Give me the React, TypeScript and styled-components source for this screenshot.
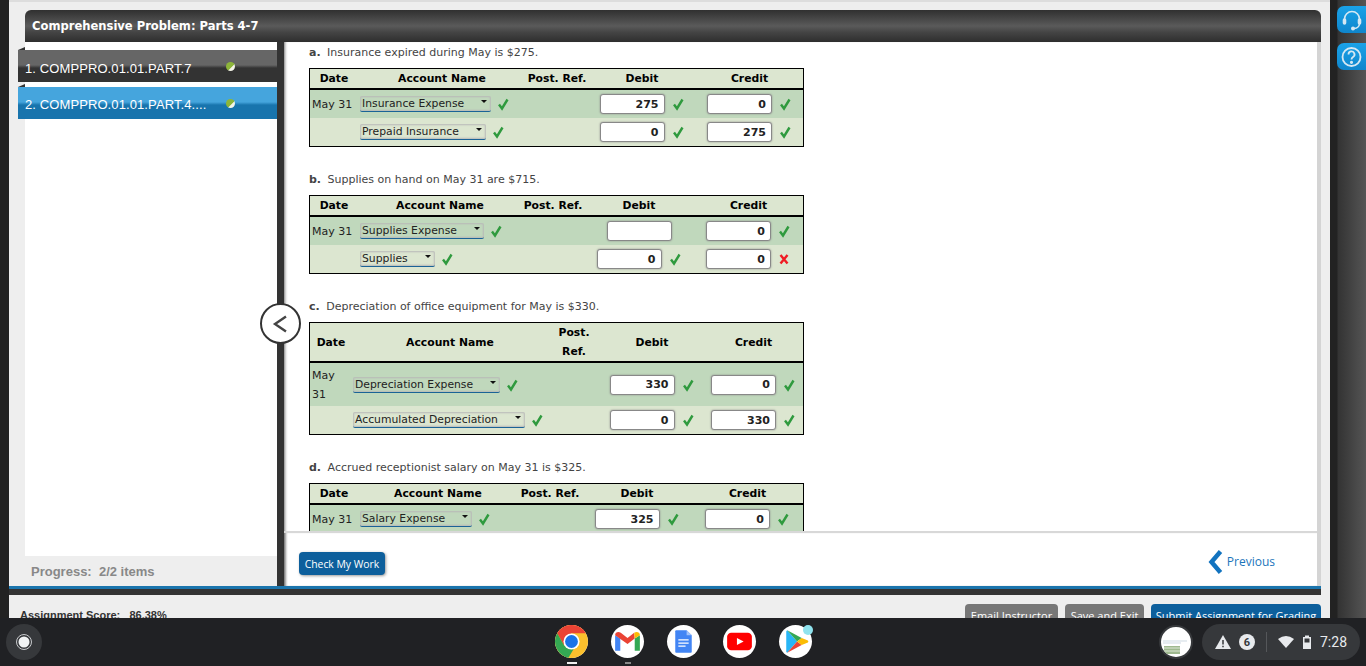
import React from 'react';
import styled, { createGlobalStyle } from 'styled-components';

const GlobalStyle = createGlobalStyle`
  html, body {
    margin: 0;
    padding: 0;
    height: 100%;
    overflow: hidden;
    background: #202124;
  }
  * {
    box-sizing: border-box;
  }
`;

const Page = styled.div`
  width: 1366px;
  height: 666px;
  display: flex;
  flex-direction: column;
  overflow: hidden;
`;

const Workspace = styled.div`
  height: 618px;
  display: flex;
  overflow: hidden;
`;

const LeftEdge = styled.div`
  width: 9px;
  background: #222;
`;

const Window = styled.div`
  width: 1321px;
  display: flex;
  flex-direction: column;
  background: #eee;
  border-top: 2px solid #ddd;
`;

const TitleWrap = styled.div`
  padding: 8px 9px 0 16px;
`;

const TitleBar = styled.div`
  height: 32px;
  padding-left: 7px;
  display: flex;
  align-items: center;
  border-radius: 6px 6px 0 0;
  background: linear-gradient(#303030, #5a5a5a 50%, #444 70%, #2e2e2e);
  color: #fff;
  font: bold 11.55px 'DejaVu Sans', Verdana, sans-serif;
`;

const Body = styled.div`
  height: 544px;
  margin: 0 9px 0 16px;
  display: flex;
`;

const Sidebar = styled.div`
  width: 252px;
  display: flex;
  flex-direction: column;
`;

const TabList = styled.div`
  flex: 1;
  padding-top: 8px;
  background: #fff;
  display: flex;
  flex-direction: column;
  gap: 5px;
`;

const Tab = styled.div<{ $active?: boolean }>`
  position: relative;
  height: 32px;
  width: 259px;
  margin-left: -7px;
  padding-left: 7px;
  display: flex;
  align-items: center;
  color: #fff;
  font: 13px 'Liberation Sans', Arial, sans-serif;
  letter-spacing: 0.1px;
  background: ${({ $active }) =>
    $active
      ? 'linear-gradient(#45a5dd 0, #45a5dd 15px, #1874ad 18px, #1874ad 100%)'
      : 'linear-gradient(#666 0, #666 15px, #333 18px, #333 100%)'};

  &::before {
    content: '';
    position: absolute;
    left: 0;
    top: -3px;
    border-style: solid;
    border-width: 0 0 3px 7px;
    border-color: transparent transparent #333 transparent;
  }
`;

const TabLabel = styled.span<{ $drop: number }>`
  width: 201px;
  padding-top: ${({ $drop }) => $drop}px;
`;

const StatusDot = styled.span`
  width: 9px;
  height: 9px;
  border-radius: 50%;
  background: linear-gradient(135deg, #8db53a 58%, #f4f4e8 62%);
`;

const Progress = styled.div`
  height: 30px;
  padding-left: 6px;
  display: flex;
  align-items: center;
  color: #888;
  font: bold 13px 'Liberation Sans', Arial, sans-serif;
  white-space: pre;
`;

const Divider = styled.div`
  position: relative;
  width: 7px;
  background: #333;
`;

const CollapseButton = styled.button`
  position: absolute;
  left: -17px;
  top: 261px;
  width: 41px;
  height: 41px;
  padding: 0;
  display: flex;
  align-items: center;
  justify-content: center;
  border-radius: 50%;
  border: 2px solid #333;
  background: #fff;
  color: #444;
`;

const Main = styled.div`
  width: 1037px;
  display: flex;
  flex-direction: column;
  background: #fff;
  border-right: 4px solid #d4d4d4;
  box-shadow: inset 3px 0 3px -2px #777;
`;

const Scroll = styled.div`
  height: 489px;
  overflow: hidden;
  padding: 3px 0 0 25px;
`;

const Question = styled.p`
  margin: 25px 0 7px;
  height: 16px;
  color: #444;
  font: 11px/16px 'DejaVu Sans', Verdana, sans-serif;

  &:first-child {
    margin-top: 0;
  }

  b {
    margin-right: 3px;
  }
`;

const Sheet = styled.table`
  width: 495px;
  table-layout: fixed;
  border-collapse: separate;
  border-spacing: 0;
  border: 1px solid #000;
  font: 10.8px 'DejaVu Sans', Verdana, sans-serif;
  color: #222;
`;

const Col = styled.col<{ $w: number }>`
  width: ${({ $w }) => $w}px;
`;

const HeadRow = styled.tr`
  background: #dce6d0;
`;

const Th = styled.th`
  height: 21px;
  padding: 0;
  border-bottom: 2px solid #000;
  font-weight: bold;
  line-height: 19px;
  color: #000;
  text-align: center;
`;

const Row = styled.tr<{ $shade?: boolean; $h?: number }>`
  height: ${({ $h }) => $h ?? 28}px;
  background: ${({ $shade }) => ($shade ? '#c0d8bc' : '#dce6d0')};
`;

const DateCell = styled.td`
  padding: 0 0 0 2px;
  font-size: 11px;
  line-height: 19px;
  white-space: normal;
`;

const AccountCell = styled.td<{ $pad?: number }>`
  padding: 0 0 0 ${({ $pad }) => $pad ?? 2}px;
`;

const AmountCell = styled.td`
  padding: 0;
  text-align: center;
`;

const Field = styled.div`
  display: flex;
  align-items: center;
`;

const AmountField = styled(Field)`
  display: inline-flex;
  vertical-align: middle;
`;

const SelectBox = styled.div<{ $w: number }>`
  position: relative;
  width: ${({ $w }) => $w}px;
  height: 16px;
  padding-left: 2px;
  line-height: 16px;
  color: #222;
  background: transparent;
  border-radius: 2px;
  box-shadow: inset 0 0 2px 1px #b8b8b8;
  border-bottom: 1px solid #1a6396;

  &::after {
    content: '';
    position: absolute;
    right: 4px;
    top: 4px;
    border-style: solid;
    border-width: 3px 3px 0;
    border-color: #111 transparent transparent;
  }
`;

const Amount = styled.input`
  width: 65px;
  height: 20px;
  padding: 0 5px 0 0;
  border: 1px solid #888;
  border-radius: 3px;
  background: #fff;
  box-shadow: 0 0 2px #888;
  outline: none;
  color: #222;
  text-align: right;
  font: bold 11px 'DejaVu Sans', Verdana, sans-serif;
`;

const MarkSlot = styled.span<{ $gap: number }>`
  margin-left: ${({ $gap }) => $gap}px;
  width: 14px;
  height: 14px;
  display: inline-flex;
`;

const Footer = styled.div`
  flex: 1;
  padding: 4px 42px 0 15px;
  display: flex;
  align-items: center;
  justify-content: space-between;
  border-top: 2px solid #d8d8d8;
  box-shadow: inset 3px 0 3px -2px #777;
`;

const CheckButton = styled.button`
  width: 86px;
  height: 23px;
  margin-top: 4px;
  padding: 0;
  border: 0;
  border-radius: 4px;
  background: #0d5f9c;
  color: #fff;
  font: 10.4px 'Open Sans', Tahoma, sans-serif;
  box-shadow: 1px 1px 3px #999;
`;

const PrevLink = styled.a`
  display: flex;
  align-items: center;
  gap: 4px;
  color: #1b75bb;
  font: 12px 'Open Sans', Tahoma, sans-serif;
`;

const BlueLine = styled.div`
  height: 3px;
  margin-right: 9px;
  background: #1b75ad;
`;

const DarkBand = styled.div`
  height: 6px;
  margin-right: 9px;
  background: #333;
`;

const BottomBar = styled.div`
  flex: 1;
  padding: 9px 9px 0 11px;
  display: flex;
  align-items: flex-start;
  justify-content: space-between;
  overflow: hidden;
`;

const Score = styled.div`
  margin-top: 5px;
  color: #333;
  font: bold 11px 'Liberation Sans', Arial, sans-serif;
  white-space: pre;
`;

const BottomActions = styled.div`
  display: flex;
  gap: 7px;
`;

const BottomButton = styled.button<{ $primary?: boolean; $w: number }>`
  width: ${({ $w }) => $w}px;
  height: 24px;
  padding: 0 0 2px;
  border: 0;
  border-radius: 4px 4px 0 0;
  background: ${({ $primary }) => ($primary ? '#0d5f9c' : '#777')};
  color: #fff;
  font: 11px 'Open Sans', Tahoma, sans-serif;
`;

const Rail = styled.div`
  flex: 1;
  padding: 6px 0 0 7px;
  display: flex;
  flex-direction: column;
  gap: 10px;
  background: linear-gradient(90deg, #222 7px, #333 8px, #555 100%);
`;

const RailButton = styled.button`
  width: 29px;
  height: 27px;
  padding: 0;
  display: flex;
  align-items: center;
  justify-content: center;
  border: 0;
  border-radius: 7px 0 0 7px;
  background: linear-gradient(#1aa2e8, #0f86cc);
`;

const Shelf = styled.div`
  flex: 1;
  position: relative;
  display: flex;
  align-items: center;
  justify-content: space-between;
  padding: 0 6px;
  background: #202124;
`;

const Launcher = styled.div`
  width: 36px;
  height: 36px;
  display: flex;
  align-items: center;
  justify-content: center;
  border-radius: 50%;
  background: #36383b;
`;

const AppRow = styled.div`
  position: absolute;
  left: 555px;
  top: 7px;
  display: flex;
  gap: 23px;
`;

const AppIcon = styled.div<{ $running?: 'focus' | 'open' }>`
  position: relative;
  width: 33px;
  height: 33px;
  border-radius: 50%;
  background: #fff;

  &::after {
    content: '';
    display: ${({ $running }) => ($running ? 'block' : 'none')};
    position: absolute;
    left: 50%;
    bottom: -6px;
    height: 2px;
    width: ${({ $running }) => ($running === 'focus' ? 10 : 6)}px;
    transform: translateX(-50%);
    background: ${({ $running }) => ($running === 'focus' ? '#eee' : '#888')};
  }
`;

const Badge = styled.span`
  position: absolute;
  right: -1px;
  top: 0;
  width: 10px;
  height: 10px;
  border-radius: 50%;
  background: #8fe3ee;
`;

const Tray = styled.div`
  display: flex;
  align-items: center;
  gap: 9px;
`;

const Thumb = styled.div`
  width: 34px;
  height: 34px;
  border-radius: 50%;
  overflow: hidden;
  border: 2px solid #36383b;
  background: #fff;
`;

const StatusPill = styled.div`
  width: 158px;
  height: 36px;
  padding-left: 13px;
  display: flex;
  align-items: center;
  border-radius: 18px;
  background: #36383b;
  color: #e8eaed;
  font: 14px Roboto, sans-serif;
`;

const CountBubble = styled.span`
  width: 16px;
  height: 16px;
  margin-left: 8px;
  display: flex;
  align-items: center;
  justify-content: center;
  border-radius: 50%;
  background: #e8eaed;
  color: #36383b;
  font: bold 11px Roboto, sans-serif;
`;

const PillSep = styled.span`
  width: 1px;
  height: 20px;
  margin: 0 11px;
  background: #55575a;
`;

const BatteryIcon = styled.svg`
  margin-left: 5px;
`;

const Clock = styled.span`
  margin-left: 5px;
`;

const CheckMark = () => (
  <svg width="14" height="14" viewBox="0 0 14 14">
    <path d="M3 7.5 L6 11.5 L11.5 2.5" fill="none" stroke="#2f9a3e" strokeWidth="2.4" />
  </svg>
);

const CrossMark = () => (
  <svg width="14" height="14" viewBox="0 0 14 14">
    <path d="M3.5 3 L10.5 11.5 M10.5 3 L3.5 11.5" fill="none" stroke="#f01c24" strokeWidth="2.4" />
  </svg>
);

const Mark = ({ kind, gap }: { kind?: 'ok' | 'bad'; gap: number }) => (
  <MarkSlot $gap={gap}>{kind === 'bad' ? <CrossMark /> : <CheckMark />}</MarkSlot>
);

type Line = {
  date?: string;
  account: string;
  selectWidth: number;
  debit?: string;
  credit: string;
  creditBad?: boolean;
};

type Entry = {
  letter: string;
  text: string;
  cols: number[];
  wrapHead?: boolean;
  rowHeights?: number[];
  lines: Line[];
};

const entries: Entry[] = [
  {
    letter: 'a.',
    text: 'Insurance expired during May is $275.',
    cols: [48, 168, 62, 108, 107],
    lines: [
      { date: 'May 31', account: 'Insurance Expense', selectWidth: 131, debit: '275', credit: '0' },
      { account: 'Prepaid Insurance', selectWidth: 126, debit: '0', credit: '275' },
    ],
  },
  {
    letter: 'b.',
    text: 'Supplies on hand on May 31 are $715.',
    cols: [48, 164, 62, 110, 109],
    lines: [
      { date: 'May 31', account: 'Supplies Expense', selectWidth: 124, credit: '0' },
      { account: 'Supplies', selectWidth: 75, debit: '0', credit: '0', creditBad: true },
    ],
  },
  {
    letter: 'c.',
    text: 'Depreciation of office equipment for May is $330.',
    cols: [42, 196, 52, 104, 99],
    wrapHead: true,
    rowHeights: [43, 28],
    lines: [
      { date: 'May 31', account: 'Depreciation Expense', selectWidth: 147, debit: '330', credit: '0' },
      { account: 'Accumulated Depreciation', selectWidth: 172, debit: '0', credit: '330' },
    ],
  },
  {
    letter: 'd.',
    text: 'Accrued receptionist salary on May 31 is $325.',
    cols: [48, 160, 64, 110, 111],
    lines: [
      { date: 'May 31', account: 'Salary Expense', selectWidth: 112, debit: '325', credit: '0' },
    ],
  },
];

const JournalEntry = ({ entry }: { entry: Entry }) => (
  <>
    <Question>
      <b>{entry.letter}</b> {entry.text}
    </Question>
    <Sheet>
      <colgroup>
        {entry.cols.map((w, i) => (
          <Col key={i} $w={w} />
        ))}
      </colgroup>
      <thead>
        <HeadRow>
          <Th>Date</Th>
          <Th>Account Name</Th>
          <Th>Post. Ref.</Th>
          <Th>Debit</Th>
          <Th>Credit</Th>
        </HeadRow>
      </thead>
      <tbody>
        {entry.lines.map((line, i) => (
          <Row key={line.account} $shade={i === 0} $h={entry.rowHeights?.[i]}>
            <DateCell>{line.date}</DateCell>
            <AccountCell $pad={entry.wrapHead ? 1 : 2}>
              <Field>
                <SelectBox $w={line.selectWidth}>{line.account}</SelectBox>
                <Mark gap={5} />
              </Field>
            </AccountCell>
            <td />
            <AmountCell>
              <AmountField>
                <Amount readOnly value={line.debit ?? ''} />
                {line.debit !== undefined && <Mark gap={6} />}
              </AmountField>
            </AmountCell>
            <AmountCell>
              <AmountField>
                <Amount readOnly value={line.credit} />
                <Mark gap={6} kind={line.creditBad ? 'bad' : 'ok'} />
              </AmountField>
            </AmountCell>
          </Row>
        ))}
      </tbody>
    </Sheet>
  </>
);

const ChromeIcon = () => (
  <svg width="33" height="33" viewBox="0 0 32 32">
    <circle cx="16" cy="16" r="16" fill="#fbc02d" />
    <path d="M2.14 8 A16 16 0 0 1 29.86 8 L16 8 L9 20 Z" fill="#ea4335" />
    <path d="M2.14 8 A16 16 0 0 0 13 31.7 L20 20 L9 20 Z" fill="#34a853" />
    <circle cx="16" cy="16" r="7.8" fill="#fff" />
    <circle cx="16" cy="16" r="6.2" fill="#1a73e8" />
  </svg>
);

const GmailIcon = () => (
  <svg width="33" height="33" viewBox="0 0 32 32">
    <path d="M4 10 V25 H9 V13 Z" fill="#4285f4" />
    <path d="M23 13 V25 H28 V10 Z" fill="#34a853" />
    <path d="M4 10 C4 7 7 6 9.5 7.5 L16 12.5 L22.5 7.5 L23 13 L16 18.5 L4 10 Z" fill="#ea4335" />
    <path d="M22.5 7.5 C25 6 28 7 28 10 L23 13 Z" fill="#fbbc04" />
  </svg>
);

const DocsIcon = () => (
  <svg width="33" height="33" viewBox="0 0 32 32">
    <path d="M9 5 H19 L24 10 V26 Q24 27 23 27 H9 Q8 27 8 26 V6 Q8 5 9 5 Z" fill="#4285f4" />
    <path d="M19 5 L24 10 H19 Z" fill="#a1c2fa" />
    <path d="M11 14.5 H21 M11 17.5 H21 M11 20.5 H18" stroke="#fff" strokeWidth="1.3" />
  </svg>
);

const YoutubeIcon = () => (
  <svg width="33" height="33" viewBox="0 0 32 32">
    <rect x="4" y="7.5" width="24" height="17" rx="4" fill="#f00" />
    <path d="M13.5 12.5 L20 16 L13.5 19.5 Z" fill="#fff" />
  </svg>
);

const PlayIcon = () => (
  <svg width="33" height="33" viewBox="0 0 32 32">
    <path d="M8 5 L17.5 16 L8 27 Q7 26.5 7 25.5 V6.5 Q7 5.5 8 5 Z" fill="#29b6f6" />
    <path d="M8 5 L22 12.5 L17.5 16 Z" fill="#34a853" />
    <path d="M8 27 L22 19.5 L17.5 16 Z" fill="#ea4335" />
    <path d="M22 12.5 L28 15 Q29 16 28 17 L22 19.5 L17.5 16 Z" fill="#fbbc04" />
  </svg>
);

const App: React.FC = () => {
  return (
    <Page>
      <GlobalStyle />
      <Workspace>
        <LeftEdge />
        <Window>
          <TitleWrap>
            <TitleBar>Comprehensive Problem: Parts 4-7</TitleBar>
          </TitleWrap>
          <Body>
            <Sidebar>
              <TabList>
                <Tab>
                  <TabLabel $drop={4}>1. COMPPRO.01.01.PART.7</TabLabel>
                  <StatusDot />
                </Tab>
                <Tab $active>
                  <TabLabel $drop={2}>2. COMPPRO.01.01.PART.4....</TabLabel>
                  <StatusDot />
                </Tab>
              </TabList>
              <Progress>Progress:  2/2 items</Progress>
            </Sidebar>
            <Divider>
              <CollapseButton aria-label="Collapse">
                <svg width="20" height="24" viewBox="0 0 20 24">
                  <path d="M15 4.5 L4 12 L15 19.5" fill="none" stroke="#444" strokeWidth="2.4" />
                </svg>
              </CollapseButton>
            </Divider>
            <Main>
              <Scroll>
                {entries.map((entry) => (
                  <JournalEntry key={entry.letter} entry={entry} />
                ))}
              </Scroll>
              <Footer>
                <CheckButton>Check My Work</CheckButton>
                <PrevLink>
                  <svg width="15" height="24" viewBox="0 0 15 24">
                    <path d="M12.5 1.5 L3.5 12 L12.5 22.5" fill="none" stroke="#1273bf" strokeWidth="4.5" />
                  </svg>
                  Previous
                </PrevLink>
              </Footer>
            </Main>
          </Body>
          <BlueLine />
          <DarkBand />
          <BottomBar>
            <Score>Assignment Score:   86.38%</Score>
            <BottomActions>
              <BottomButton $w={93}>Email Instructor</BottomButton>
              <BottomButton $w={79}>Save and Exit</BottomButton>
              <BottomButton $primary $w={170}>Submit Assignment for Grading</BottomButton>
            </BottomActions>
          </BottomBar>
        </Window>
        <Rail>
          <RailButton aria-label="Support">
            <svg width="24" height="24" viewBox="0 0 24 24" fill="none" stroke="#d5e8f3" strokeWidth="1.6">
              <path d="M4.5 15 V11 A7.5 7.5 0 0 1 19.5 11 V15" />
              <rect x="3.5" y="11" width="2" height="5" rx="1" fill="#d5e8f3" />
              <rect x="18.5" y="11" width="2" height="5" rx="1" fill="#d5e8f3" />
              <path d="M19.5 16 Q19 20 14 20.5" />
              <circle cx="13" cy="20.5" r="1.2" fill="#d5e8f3" />
            </svg>
          </RailButton>
          <RailButton aria-label="Help">
            <svg width="24" height="24" viewBox="0 0 24 24" fill="none" stroke="#d5e8f3" strokeWidth="1.8">
              <circle cx="11.5" cy="12" r="9" />
              <path d="M8.5 9.5 A3 3 0 1 1 13 12 Q11.5 13 11.5 14.5" />
              <circle cx="11.5" cy="17.3" r="0.7" fill="#d5e8f3" />
            </svg>
          </RailButton>
        </Rail>
      </Workspace>
      <Shelf>
        <Launcher>
          <svg width="18" height="18" viewBox="0 0 18 18">
            <circle cx="9" cy="9" r="7.5" fill="none" stroke="#c8cacd" strokeWidth="1" />
            <circle cx="9" cy="9" r="5.5" fill="#f1f3f4" />
          </svg>
        </Launcher>
        <AppRow>
          <AppIcon $running="focus">
            <ChromeIcon />
          </AppIcon>
          <AppIcon $running="open">
            <GmailIcon />
          </AppIcon>
          <AppIcon>
            <DocsIcon />
          </AppIcon>
          <AppIcon>
            <YoutubeIcon />
          </AppIcon>
          <AppIcon>
            <PlayIcon />
            <Badge />
          </AppIcon>
        </AppRow>
        <Tray>
          <Thumb>
            <svg width="30" height="30" viewBox="0 0 30 30">
              <path d="M2 14 H26 M2 16 H20" stroke="#b9c9d6" strokeWidth="0.7" />
              <rect x="3" y="19" width="16" height="8" fill="#9fb98f" />
              <path d="M3 21 H19 M3 24 H19" stroke="#eef3e8" strokeWidth="0.8" />
            </svg>
          </Thumb>
          <StatusPill>
            <svg width="16" height="16" viewBox="0 0 16 16">
              <path d="M8 1 L16 15 H0 Z" fill="#e8eaed" />
              <path d="M8 6 V10.5 M8 11.8 V13.2" stroke="#36383b" strokeWidth="1.5" />
            </svg>
            <CountBubble>6</CountBubble>
            <PillSep />
            <svg width="16" height="14" viewBox="0 0 16 14">
              <path d="M0 4 Q8 -2 16 4 L8 13 Z" fill="#e8eaed" />
            </svg>
            <BatteryIcon width="16" height="14" viewBox="0 0 16 14">
              <path d="M6 0.5 H10 V2 H12 V14 H4 V2 H6 Z" fill="#e8eaed" />
              <rect x="5.5" y="3.5" width="5" height="4" fill="#36383b" />
            </BatteryIcon>
            <Clock>7:28</Clock>
          </StatusPill>
        </Tray>
      </Shelf>
    </Page>
  );
};

export default App;
